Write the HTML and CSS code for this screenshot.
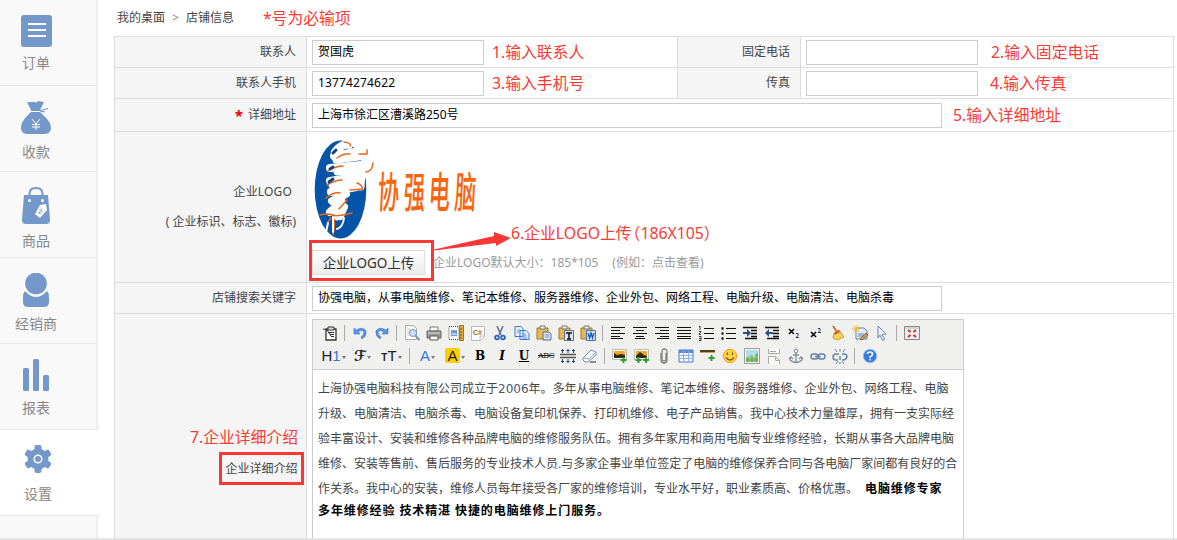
FILE: index.html
```html
<!DOCTYPE html>
<html lang="zh-CN">
<head>
<meta charset="utf-8">
<title>店铺信息</title>
<link rel="stylesheet" href="styles.css">
</head>
<body>
<nav class="sidebar">
  <a class="nav-item"><svg width="32" height="38"><rect x="1" width="31" height="32" rx="3"/><path class="cut" d="M8 9h18M8 15h18M8 21h18" stroke-width="2"/></svg><span>订单</span></a>
  <a class="nav-item"><svg width="32" height="41"><path d="M7 1l8 0 1 1 2-2 6 1-4 8H11zM11 11h9c4 4 11 9 11 16 0 5-4 6-8 6H9c-4 0-8-1-8-6 0-7 6-12 10-16z"/><path class="line" d="M11 9.500h10l7-2M20 10l5 1" stroke-width="1.200"/><path class="cut" d="M12 18l4 5 4-5M16 23v6M12 23.500h8M12 26h8" stroke-width="1"/></svg><span>收款</span></a>
  <a class="nav-item"><svg width="32" height="44"><path d="M4 8h24l2 25q0 4-4 4H6q-4 0-4-4z"/><path class="line" d="M9.500 13V7q0-6 6.500-6t6.500 6v6" stroke-width="2"/><circle class="dot" cx="9.500" cy="13.500" r="1.500"/><circle class="dot" cx="22.500" cy="13.500" r="1.500"/><path class="dot" d="M20 18l6-1 1 6-7 8-5-4z"/><path class="line" d="M19 22l4 3M17.500 25l4 2M22 21l-3 6" stroke-width=".7"/></svg><span>商品</span></a>
  <a class="nav-item"><svg width="32" height="41"><circle cx="16" cy="10.500" r="10.800"/><path d="M5 18q11 12 22 0 2 2 2 6v5q0 5-5 5H8q-5 0-5-5v-5q0-4 2-6z"/></svg><span>经销商</span></a>
  <a class="nav-item"><svg width="32" height="39"><rect x="3" y="9" width="6" height="23" rx="1.500"/><rect x="13" width="6" height="32" rx="1.500"/><rect x="23" y="16" width="6" height="16" rx="1.500"/></svg><span>报表</span></a>
  <a class="nav-item active"><svg width="32" height="39"><circle cx="16" cy="14" r="10.500"/><rect x="12.500" width="7" height="28" rx="2"/><rect x="12.500" width="7" height="28" rx="2" transform="rotate(60 16 14)"/><rect x="12.500" width="7" height="28" rx="2" transform="rotate(120 16 14)"/><circle class="ring" cx="16" cy="14" r="3.800"/></svg><span>设置</span></a>
</nav>

<main class="main">
  <header class="crumbs"><span>我的桌面</span><i>&gt;</i><span>店铺信息</span><em class="note">*号为必输项</em></header>

  <section class="form">
    <div class="row h31">
      <div class="label">联系人</div>
      <div class="cell half"><div class="input w172">贺国虎</div><em class="note n8">1.输入联系人</em></div>
      <div class="label second">固定电话</div>
      <div class="cell"><div class="input w172"></div><em class="note n13">2.输入固定电话</em></div>
    </div>
    <div class="row h31">
      <div class="label">联系人手机</div>
      <div class="cell half"><div class="input w172 num">13774274622</div><em class="note n8">3.输入手机号</em></div>
      <div class="label second">传真</div>
      <div class="cell"><div class="input w172"></div><em class="note n12">4.输入传真</em></div>
    </div>
    <div class="row h33">
      <div class="label"><b class="star">*</b>详细地址</div>
      <div class="cell"><div class="input w630">上海市徐汇区漕溪路250号</div><em class="note n11">5.输入详细地址</em></div>
    </div>
    <div class="row h151">
      <div class="label logo-label"><span class="logo-name">企业LOGO</span><span>( 企业标识、标志、徽标)</span></div>
      <div class="cell logo-cell">
        <svg class="logo" width="186" height="105" viewBox="312 137 186 105">
          <ellipse cx="340.500" cy="189.500" rx="25.800" ry="49" fill="#0554a7"/>
          <g fill="none" stroke-linecap="round" stroke-linejoin="round">
            <path d="M335 152q7-9 14-7M334 156l31-6M330 168l40-4M330 181l32-5M331 192l25-5M332 201l14-7M341 200q-4 7-11 12M344 207l-4 9" stroke="#fff" stroke-width="8"/>
            <path d="M336 160l30-4 5 9-34 7 25-1-1 16-29-2M338 184l20-1M342 202l-5 15" stroke="#fff" stroke-width="7"/>
            <path d="M344 142q8 1 6 4M359 154h8v-4M337 158q7-5 13-4M328 171q8-5 15-5M366 172q6 0 7-9M327 185q8-5 15-5M350 190l13-1q-2-5-6-6M326 198q7-6 14-5M339 209l8-9M320 215q8-2 12 0t20-2M331 218l-3 4M333 235q2-9 1-16" stroke="#e9651c" stroke-width="1.500"/>
            <path d="M333 153l3-3M330 169l3-2M329 182l4-3" stroke="#174174" stroke-width="3"/>
            <path d="M328 223q-1 5-2 9M337 229q6-2 7-11M333 217v15" stroke="#fff" stroke-width="2"/>
          </g>
          <text class="logo-text" transform="translate(376 208) skewX(-3) scale(1 2)" x="1 27 52 78" y="0">协强电脑</text>
        </svg>
        <div class="upload-row"><button class="upload">企业LOGO上传</button><span class="hint">企业LOGO默认大小<span class="colon">：</span>185*105</span><span class="hint eg">(例如<span class="colon">：</span>点击查看)</span></div>
        <div class="mark mark-upload"></div>
        <svg class="arrow" width="80" height="22"><path d="M0 17.500L60 4V0L77 6 62 14V11L0 18.500z"/></svg>
        <em class="note note-logo">6.企业LOGO上传<span class="dim">（186X105）</span></em>
      </div>
    </div>
    <div class="row h31">
      <div class="label">店铺搜索关键字</div>
      <div class="cell"><div class="input w630">协强电脑，从事电脑维修、笔记本维修、服务器维修、企业外包、网络工程、电脑升级、电脑清洁、电脑杀毒</div></div>
    </div>
    <div class="row last">
      <div class="label intro"><em class="note note-intro">7.企业详细介绍</em><span class="mark-intro">企业详细介绍</span></div>
      <div class="cell editor-cell">
        <div class="editor">
          <div class="toolbar">
            <div class="tools">
              <svg class="t"><path d="M4 4h10v11H4z" fill="#fff" stroke="#333" stroke-width="1.300"/><path d="M6 2h6v3H6z" fill="#ddd" stroke="#333"/><path d="M1 4l4 1 4 6M6 7.500h6M8 9.500h4M9 11.500h3" stroke="#333" fill="none"/></svg><i class="sep"></i>
              <svg class="t"><path d="M2 3v6h6L6 7q5-3 6 0 0 3-3 5l1 2q5-3 4-8-3-5-10-1z" fill="#5a94e8" stroke="#3973c8" stroke-width=".6"/></svg>
              <svg class="t"><path d="M14 3v6H8l2-2q-5-3-6 0 0 3 3 5l-1 2Q1 11 2 6q3-5 10-1z" fill="#5a94e8" stroke="#3973c8" stroke-width=".6"/></svg><i class="sep"></i>
              <svg class="t"><path d="M1.500.5h8l3 3v11h-11z" fill="#fff" stroke="#aaa"/><path d="M3 4h4M3 6h3M3 8h2M3 10h3" stroke="#ccc"/><circle cx="9" cy="8" r="3.500" fill="#cfe5f7" stroke="#7697b9"/><path d="M11.500 11l4 4" stroke="#8598b4" stroke-width="2"/></svg>
              <svg class="t"><path d="M4 2h8v4H4z" fill="#fff" stroke="#777"/><path d="M1 6h14v7H1z" fill="#999" stroke="#666"/><path d="M2 8h12" stroke="#ddd"/><path d="M4 11h8v4H4z" fill="#fff" stroke="#555"/></svg>
              <svg class="t"><path d="M1 1.500h10v13H1z" fill="#fff" stroke="#444" stroke-dasharray="1 1"/><path d="M3 5h6v6H3z" fill="#719ed0"/><path d="M4 9h4" stroke="#fff"/><path d="M11.500.5h4v15h-4z" fill="#e5ad3e" stroke="#a87412"/><path d="M12 4h2M12 7h2M12 10h2M12 13h2" stroke="#76500d"/></svg>
              <svg class="t"><path d="M1.500 1.500h13v10l-4 4h-9z" fill="#fff" stroke="#bbb"/><text x="3" y="10" class="cs">C#</text><path d="M10 15v-4h4" fill="none" stroke="#bbb"/></svg>
              <svg class="t"><path d="M5 1l4 9M11 1L7 10" stroke="#5e7394" stroke-width="1.600"/><circle cx="5" cy="12.500" r="1.900" fill="none" stroke="#2861b9" stroke-width="1.700"/><circle cx="11" cy="12.500" r="1.900" fill="none" stroke="#2861b9" stroke-width="1.700"/></svg>
              <svg class="t"><path d="M1 1.500h6l2 2v8H1zM6 5.500h6l3 3v6H6z" fill="#e7f1ff" stroke="#3d78c9"/><path d="M3 5h3M3 7h3M8 9h4M8 11h5M8 13h5" stroke="#5d92da"/></svg>
              <svg class="t"><path class="clip" d="M1 3h11v11H1z"/><path class="clip-top" d="M4 1h5v3H4z"/><path d="M7 7h6l2 2v6H7z" fill="#d9e4f3" stroke="#5d6e86"/><path d="M9 10h4M9 12h4" stroke="#7890b5"/></svg>
              <svg class="t"><path class="clip" d="M1 3h11v11H1z"/><path class="clip-top" d="M4 1h5v3H4z"/><path d="M6.500 5.500h9v10h-9z" fill="#dde4ec" stroke="#5d6e86"/><path d="M8 8h6M11 8v6M9 14h4" stroke="#111" stroke-width="1.500"/></svg>
              <svg class="t"><path class="clip" d="M1 3h11v11H1z"/><path class="clip-top" d="M4 1h5v3H4z"/><path d="M6.500 5.500h9v10h-9z" fill="#d5e6fb" stroke="#4774ad"/><path d="M8 8l1.500 5L11 8l1.500 5L14 8" fill="none" stroke="#2160b2" stroke-width="1.500"/></svg><i class="sep"></i>
              <svg class="t k"><path d="M1 2.500h14M1 5.500h9M1 8.500h14M1 11.500h9M1 13.500h12"/></svg>
              <svg class="t k"><path d="M1 2.500h14M4 5.500h8M1 8.500h14M4 11.500h8M3 13.500h10"/></svg>
              <svg class="t k"><path d="M1 2.500h14M6 5.500h9M1 8.500h14M6 11.500h9M3 13.500h12"/></svg>
              <svg class="t k"><path d="M1 2.500h14M1 5.500h14M1 8.500h14M1 11.500h14M1 13.500h14"/></svg>
              <svg class="t k"><path d="M6 3.500h10M6 8.500h10M6 13.500h10"/><path d="M1 2l1-1v4M1 6.500h2L1 9.500h2M1 11.500h2v4H1M1 13.500h2" stroke-width=".8"/></svg>
              <svg class="t k"><path d="M6 3.500h10M6 8.500h10M6 13.500h10"/><path d="M1.500 3.500h2M1.500 8.500h2M1.500 13.500h2" stroke-width="2.500"/></svg>
              <svg class="t k"><path d="M1 2.500h14M9 5.500h6M9 8.500h6M9 11.500h6M3 13.500h12" stroke-width="1.300"/><path d="M1 7h4V4l4 4-4 4V9H1z" fill="#2b4e84" stroke="none"/></svg>
              <svg class="t k"><path d="M1 2.500h14M9 5.500h6M9 8.500h6M9 11.500h6M3 13.500h12" stroke-width="1.300"/><path d="M9 7H5V4L1 8l4 4V9h4z" fill="#2b4e84" stroke="none"/></svg>
              <svg class="t k"><path d="M3 4l5 5M8 4l-5 5" stroke-width="1.700"/><path d="M10 8.500h2v2l-2 2h3" stroke="#246"/></svg>
              <svg class="t k"><path d="M3 7l5 5M8 7l-5 5" stroke-width="1.700"/><path d="M10 3.500h2v2l-2 2h3" stroke="#246"/></svg>
              <svg class="t"><path d="M3 1l4 6" stroke="#b77d32" stroke-width="2"/><path d="M4 8l5-3 5 7-7 3-4-2z" fill="#f8d654" stroke="#cc9e25"/><path d="M4 8l5-3 1 2-5 3z" fill="#d65743"/></svg>
              <svg class="t"><path d="M4 3h8l3 3v8H4z" fill="#e4edf8" stroke="#6381aa"/><path d="M0 4h8M4 0v8M1 1l6 6M7 1L1 7" stroke="#f5bd2d"/><path d="M6 9h6M6 11h5" stroke="#637fa7"/><path d="M8 14l6-6 2 2-6 5z" fill="#e49b4d" stroke="#67502b" stroke-width=".8"/></svg>
              <svg class="t"><path d="M4 1l8 8-4 .500 2.500 5-2 1L6 10l-2 3z" fill="#edf5ff" stroke="#6487b4"/></svg><i class="sep"></i>
              <svg class="t"><path d="M.5 1.500h15v13H.5z" fill="#eee" stroke="#888"/><path d="M1 3h14" stroke="#bbb"/><path d="M4 5l2.500 2M12 5L9.500 7M4 12l2.500-2M12 12l-2.500-2" stroke="#c72828" stroke-width="1.800"/></svg>
            </div>
            <div class="tools">
              <span class="w29">H<b class="blue">1</b><u></u></span><span class="w29 script">ℱ<u></u></span><span class="w29"><small>T</small>T<u></u></span><i class="sep"></i>
              <span class="w27 blue">A<u></u></span><span class="w28"><b class="hl">A</b><u></u></span>
              <span class="t serif">B</span><span class="t serif it">I</span><span class="t serif un">U</span><span class="t abc">ABC</span>
              <svg class="t"><path d="M0 6.500h16M0 9.500h16" stroke="#555" stroke-width="1.500"/><path d="M2.500 1v4M8 1v4M13.500 1v4M2.500 11v4M8 11v4M13.500 11v4M1 2.500h3M6.500 2.500h3M12 2.500h3M1 13.500h3M6.500 13.500h3M12 13.500h3" stroke="#24466e"/></svg>
              <svg class="t"><path d="M8 14h6" stroke="#222"/><path d="M1 10l8-8 5 2v3l-8 7H3l-2-2z" fill="#f7faff" stroke="#778ba8"/><path d="M2 10l5 1 7-7" fill="none" stroke="#91a5c1"/></svg><i class="sep"></i>
              <svg class="t"><path d="M.5 1.500h14v10H.5z" fill="#fff" stroke="#bbb"/><path d="M2 3h11v7H2z" fill="#f1a628"/><path d="M2 10V5l3 2 4-1 4 1v3z" fill="#2c2b15"/><path class="plus" d="M11.500 9v6M8.500 12h6"/></svg>
              <svg class="t"><path d="M.5 1.500h14v10H.5z" fill="#fff" stroke="#bbb"/><path d="M2 3h11v7H2z" fill="#f1a628"/><path d="M2 8l4-4 4 3 3 1v2H2z" fill="#2c2b15"/><path class="plus" d="M12 9v6M9 12h6M4.500 9v6M1.500 12h6"/></svg>
              <svg class="t"><path d="M5 5v7q0 3 3 3t3-3V4q0-3-3-3-2 0-2 3v7q0 2 2 2t2-2V5" fill="none" stroke="#858585" stroke-width="1.300"/></svg>
              <svg class="t"><path d="M1 2h14v12H1z" fill="#f4f8fd" stroke="#467bc3"/><path d="M1 3.500h14" stroke="#588ad0" stroke-width="3"/><path d="M1 7.500h14M1 10.500h14M5.500 3v11M10.500 3v11" stroke="#8eb1df"/></svg>
              <svg class="t"><path d="M0 3h15" stroke="#553e18" stroke-width="2"/><path d="M0 4.500h15" stroke="#cda157"/><path class="plus" d="M11.500 7v6M8.500 10h6"/></svg>
              <svg class="t"><circle cx="8" cy="8" r="6.700" fill="#ffd544" stroke="#e5a321"/><path d="M5.500 4.500v2.500M10.500 4.500v2.500M4 9.500q4 5 8 0" fill="none" stroke="#8b5316" stroke-width="1.300"/></svg>
              <svg class="t"><path d="M.5.5h15v15H.5z" fill="#fff" stroke="#999"/><path d="M2 2h12v12H2z" fill="#a6dfef"/><path d="M2 10l5-3 3 2 4-5v10H2z" fill="#68ae54"/><path d="M6 2v12M2 9h12M10 2v12" stroke="#d2ead8" stroke-width=".6"/></svg>
              <svg class="t"><path d="M2.500 1v4.500h11V1M2.500 16V8.500h7l4 4V16M9.500 9v3.500h4M4 3.500h6" fill="#fafafa" stroke="#aaa"/></svg>
              <svg class="t"><circle cx="8" cy="3" r="1.800" fill="none" stroke="#818d98"/><path d="M8 5v9M5 7h6M2 9v3q6 5 12 0V9M1 11l2-2 2 2M11 11l2-2 2 2" fill="none" stroke="#818d98" stroke-width="1.300"/></svg>
              <svg class="t chain"><rect x="1" y="6" width="7" height="5" rx="2.500"/><rect x="8" y="6" width="7" height="5" rx="2.500"/><path d="M5 8.500h6"/></svg>
              <svg class="t chain"><path d="M7 6H4q-3 0-3 3t3 3h2M10 12h1q3 0 4-3 0-3-3-3h-2M8 8v4"/><path d="M3 1l2 3M8 1v3M13 1l-2 3M4 16l2-3M8 16v-2M12 16l-2-3" stroke-width="1"/></svg><i class="sep"></i>
              <svg class="t"><circle cx="8" cy="8" r="6.700" fill="#3579e5" stroke="#9abdf0"/><path d="M5.500 6q0-2 2.500-2t2.500 2-2.500 3v1M8 11v1.500" fill="none" stroke="#fff" stroke-width="1.700"/></svg>
            </div>
          </div>
          <div class="content">
            <p>上海协强电脑科技有限公司成立于<span class="year">2006</span>年。多年从事电脑维修、笔记本维修、服务器维修、企业外包、网络工程、电脑</p>
            <p>升级、电脑清洁、电脑杀毒、电脑设备复印机保养、打印机维修、电子产品销售。我中心技术力量雄厚，拥有一支实际经</p>
            <p>验丰富设计、安装和维修各种品牌电脑的维修服务队伍。拥有多年家用和商用电脑专业维修经验，长期从事各大品牌电脑</p>
            <p>维修、安装等售前、售后服务的专业技术人员<span class="blue">.</span>与多家企事业单位签定了电脑的维修保养合同与各电脑厂家间都有良好的合</p>
            <p>作关系。我中心的安装，维修人员每年接受各厂家的维修培训，专业水平好，职业素质高、价格优惠。<b class="tail">电脑维修专家</b></p>
            <p class="slogan"><b>多年维修经验 技术精湛 快捷的电脑维修上门服务。</b></p>
          </div>
        </div>
      </div>
    </div>
  </section>
</main>
<div class="bottom-bar"></div>
</body>
</html>
```

FILE: styles.css
```css
* { box-sizing: border-box; }
body {
  margin: 0;
  width: 1177px;
  height: 540px;
  overflow: hidden;
  display: flex;
  position: relative;
  background: #fff;
  color: #444;
  font: 12px/20px "Noto Sans", "Noto Sans CJK SC", sans-serif;
}
svg { display: block; flex: none; }
p { margin: 0; }

/* Sidebar */
.sidebar {
  width: 97px;
  flex: none;
  background: #f9f9f9;
  border-right: 1px solid #ececec;
  box-shadow: 1px 0 3px #eee;
}
.nav-item {
  display: flex;
  flex-direction: column;
  align-items: center;
  width: 96px;
  height: 86px;
  padding: 15px 24px 0 0;
  border-bottom: 1px solid #e8e8e8;
  color: #888;
  font-size: 14px;
}
.nav-item.active { width: 100px; background: #fff; position: relative; }
.nav-item svg { fill: #7598cb; }
.nav-item .cut { fill: none; stroke: #fff; }
.nav-item .line { fill: none; stroke: #7598cb; }
.nav-item .dot { fill: #fff; }
.nav-item .ring { fill: #7598cb; stroke: #fff; stroke-width: 1.500; }

/* Page header */
.main { flex: none; width: 1060px; margin-left: 17px; }
.crumbs { display: flex; align-items: center; height: 36px; padding-left: 3px; }
.crumbs i { margin: 0 7px; font-style: normal; color: #888; font-size: 12px; }
.crumbs .note { margin-left: 29px; }
.note {
  color: #fa3a34;
  font: 400 15.800px/20px "Noto Sans", "Noto Sans CJK SC", sans-serif;
  white-space: nowrap;
}
.n8 { margin-left: 8px; }
.n11 { margin-left: 11px; }
.n12 { margin-left: 12px; }
.n13 { margin-left: 13px; }

/* Form table */
.form { border: 1px solid #ddd; border-bottom: 0; height: 504px; }
.row { display: flex; border-bottom: 1px solid #ddd; }
.h31 { height: 31px; }
.h33 { height: 33px; }
.h151 { height: 151px; }
.last { height: 224px; border-bottom: 0; }
.label {
  display: flex;
  flex: none;
  align-items: center;
  justify-content: flex-end;
  width: 192px;
  padding-right: 10px;
  border-right: 1px solid #ddd;
  background: #f5f5f5;
}
.label.second { width: 124px; border-left: 1px solid #ddd; }
.star { margin-right: 5px; color: #e00; font-size: 15px; line-height: 10px; }
.cell { display: flex; flex: 1; align-items: center; padding-left: 5px; }
.cell.half { flex: none; width: 370px; }
.input {
  flex: none;
  height: 25px;
  padding-left: 5px;
  border: 1px solid #ccc;
  background: #fff;
  color: #000;
  line-height: 22px;
  white-space: nowrap;
}
.num { letter-spacing: .150px; }
.w172 { width: 172px; }
.w630 { width: 630px; }

/* Logo row */
.label.logo-label {
  flex-direction: column;
  align-items: flex-end;
  justify-content: center;
  gap: 10px;
}
.logo-name { margin-right: 4px; letter-spacing: .150px; }
.cell.logo-cell { position: relative; flex-direction: column; align-items: flex-start; padding-top: 5px; }
.logo-text { font: 500 21.500px "Noto Sans CJK SC", sans-serif; fill: #f9640d; }
.upload-row { display: flex; align-items: center; margin-top: 8px; height: 25px; }
.upload {
  width: 113px;
  height: 25px;
  padding: 0;
  border: 1px solid #ddd;
  background: linear-gradient(#fff, #ececec);
  color: #333;
  font: 13.500px/22px "Noto Sans", "Noto Sans CJK SC", sans-serif;
}
.hint { margin-left: 8px; color: #999; white-space: nowrap; }
.hint.eg { margin-left: 14px; }
.colon { font-family: "Noto Sans CJK TC", sans-serif; }
.mark { position: absolute; border: 3px solid #fb3735; }
.mark-upload { left: 2px; top: 108px; width: 125px; height: 41px; }
.arrow { position: absolute; left: 127px; top: 100px; fill: #fb3735; }
.note-logo { position: absolute; left: 204px; top: 91px; }
.dim { margin-left: -7px; }

/* Intro row */
.label.intro { flex-direction: column; align-items: flex-end; justify-content: flex-start; padding: 113px 2px 0 0; }
.note-intro { margin-right: 6px; }
.mark-intro { margin-top: 5px; width: 85px; height: 33px; border: 3px solid #fb3735; line-height: 28px; text-align: center; }
.cell.editor-cell { align-items: flex-start; padding-top: 5px; }
.editor { width: 652px; height: 225px; border: 1px solid #ccc; }
.toolbar { height: 50px; padding: 1px 0 0; margin-left: -1px; background: #f0f0ee; border-bottom: 1px solid #ccc; border-left: 1px solid #ccc; }
.tools { display: flex; align-items: center; height: 23px; padding-left: 6px; }
.t { width: 16px; height: 16px; margin: 0 3px; flex: none; }
.sep { width: 1px; height: 16px; margin: 0 4px 0 3px; background: #aaa; flex: none; }
.k { fill: none; stroke: #111; }
.clip { fill: #e6b955; stroke: #a4742b; }
.clip-top { fill: #eee; stroke: #777; }
.cs { font: bold 7px "Liberation Sans", sans-serif; fill: #94621b; }
.plus { stroke: #319c35; stroke-width: 2; fill: none; }
.chain { fill: none; stroke: #6984a8; stroke-width: 1.500; }
.w29, .w28, .w27 {
  display: flex;
  flex: none;
  align-items: center;
  justify-content: center;
  color: #222;
  font: 15px/20px "Liberation Sans", sans-serif;
}
.w29 { width: 29px; }
.w28 { width: 28px; }
.w27 { width: 27px; }
.w29 small { font-size: 10px; font-weight: bold; margin-top: 4px; }
.w29.script { font: bold 15px/20px "DejaVu Serif", "DejaVu Sans", serif; }
.blue { color: #3576df; font-weight: 400; }
.tools u { margin: 3px 0 0 1px; border: 2.500px solid transparent; border-top: 3px solid #777; border-bottom: 0; }
.hl { width: 15px; height: 15px; border-radius: 2px; background: #fc0; font-weight: 400; line-height: 15px; text-align: center; }
.serif { color: #000; font: bold 12px/16px "DejaVu Serif", serif; text-align: center; }
.it { font-style: italic; }
.un { text-decoration: underline; }
.abc { color: #222; font: 8px/16px "DejaVu Serif", serif; letter-spacing: -.500px; text-decoration: line-through; text-align: center; }
.content { padding: 6px 0 0 5px; line-height: 25px; white-space: nowrap; }
.year { font-family: "DejaVu Sans", sans-serif; color: #465570; line-height: 20px; }
.tail { margin-left: 7px; }
.content b { color: #000; letter-spacing: .900px; }
.slogan { line-height: 20px; }
.bottom-bar { position: absolute; left: 0; right: 0; bottom: 0; height: 2px; background: #e4e4e4; }
```
